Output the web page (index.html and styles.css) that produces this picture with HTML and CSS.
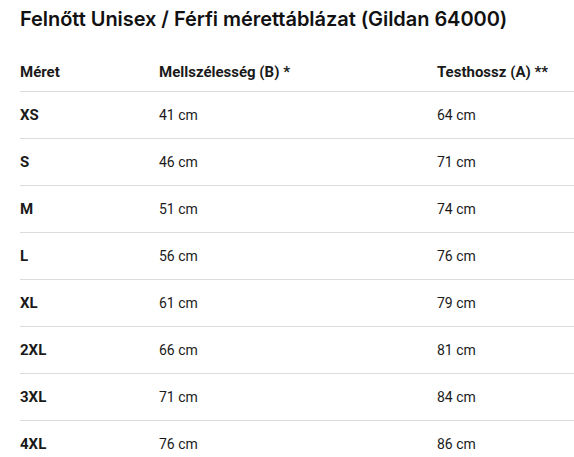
FILE: index.html
```html
<!DOCTYPE html>
<html lang="hu">
<head>
    <meta charset="UTF-8">
    <meta name="viewport" content="width=device-width, initial-scale=1">
    <title>Mérettáblázat</title>
    <link rel="stylesheet" href="styles.css">
</head>
<body>

<div class="meretek">
    <h1 class="cim">Felnőtt Unisex / Férfi mérettáblázat (Gildan 64000)</h1>

    <table class="tabla">
        <thead>
            <tr>
                <th class="c1">Méret</th>
                <th class="c2">Mellszélesség (B) *</th>
                <th>Testhossz (A) **</th>
            </tr>
        </thead>
        <tbody>
            <tr><th>XS</th><td>41 cm</td><td>64 cm</td></tr>
            <tr><th>S</th><td>46 cm</td><td>71 cm</td></tr>
            <tr><th>M</th><td>51 cm</td><td>74 cm</td></tr>
            <tr><th>L</th><td>56 cm</td><td>76 cm</td></tr>
            <tr><th>XL</th><td>61 cm</td><td>79 cm</td></tr>
            <tr><th>2XL</th><td>66 cm</td><td>81 cm</td></tr>
            <tr><th>3XL</th><td>71 cm</td><td>84 cm</td></tr>
            <tr><th>4XL</th><td>76 cm</td><td>86 cm</td></tr>
        </tbody>
    </table>
</div>

</body>
</html>
```

FILE: styles.css
```css
body{margin:0;background:#fff;color:#1a1a1a;font-family:Roboto,"Liberation Sans",sans-serif;}
.meretek{padding:7px 0 0 20px;}
.cim{font-family:Inter,"Open Sans",sans-serif;font-weight:560;font-size:20px;line-height:24px;margin:0 0 22px 0;color:#111;letter-spacing:-0.05px;}
.tabla{width:100%;border-collapse:collapse;font-size:14px;}
.tabla th,.tabla td{text-align:left;padding:0;height:46px;border-bottom:1px solid #dcdce0;vertical-align:middle;}
.tabla th{font-size:15px;font-weight:700;}
.tabla thead th{height:38px;}
.tabla tbody tr:last-child th,.tabla tbody tr:last-child td{border-bottom:none;}
.c1{width:139px;}
.c2{width:278px;}
```
